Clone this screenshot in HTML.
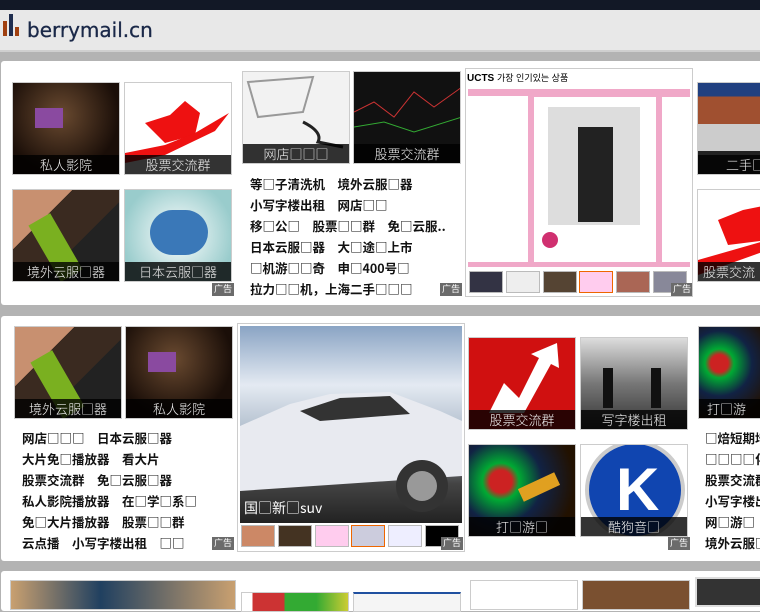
<!DOCTYPE html>
<html><head><meta charset="utf-8"><style>
*{margin:0;padding:0;box-sizing:border-box}
body{width:760px;height:600px;overflow:hidden;background:#b3b3b3;position:relative;font-family:"Liberation Sans","Noto Sans CJK SC",sans-serif}
.a{position:absolute}
.top{left:0;top:0;width:760px;height:10px;background:#121826}
.hd{left:0;top:10px;width:760px;height:42px;background:#e8e8e8;border-bottom:2px solid #cfcfcf}
.pn{background:#fff;border-radius:3px}
.t{position:absolute;overflow:hidden;border:1px solid #ccc}
.cap{position:absolute;left:0;bottom:0;width:100%;height:19px;background:rgba(0,0,0,.8);color:#eee;font-size:13px;text-align:center;line-height:19px;font-family:"Noto Sans CJK SC",sans-serif;font-weight:300}
.ad{position:absolute;width:22px;height:13px;background:#6b6b6b;color:#fff;font-size:9px;line-height:13px;text-align:center}
.tx{position:absolute;font-size:12.5px;font-weight:bold;color:#111;line-height:21px;white-space:nowrap;font-family:"Noto Sans CJK SC",sans-serif}
.th{position:absolute;width:34px;height:22px;border:1px solid #bbb}
</style></head><body>
<div class="a top"></div>
<div class="a hd">
 <div class="a" style="left:3px;top:11px;width:4px;height:15px;background:#a04010"></div>
 <div class="a" style="left:9px;top:4px;width:4px;height:22px;background:#1f2d4f"></div>
 <div class="a" style="left:15px;top:17px;width:4px;height:9px;background:#a04010"></div>
 <div class="a" style="left:27px;top:8px;font-size:20px;color:#1a2848;font-family:'DejaVu Sans',sans-serif;-webkit-text-stroke:0.3px #1a2848">berrymail.cn</div>
</div>

<!-- panel 1 -->
<div class="a pn" style="left:1px;top:61px;width:770px;height:244px"></div>
<div class="t" style="left:12px;top:82px;width:108px;height:93px;background:radial-gradient(circle at 45% 35%,#6a4a30,#1a0e08 70%)"><div class="a" style="left:22px;top:25px;width:28px;height:20px;background:#8a4aa0"></div><div class="cap">私人影院</div></div>
<div class="t" style="left:124px;top:82px;width:108px;height:93px;background:#fff"><svg class="a" width="108" height="93"><path d="M20 40 L45 32 L60 18 L75 30 L70 52 L40 60Z" fill="#e11"/><path d="M0 70 L40 62 L70 50 L104 30 L90 48 L40 72 L0 80Z" fill="#e11"/></svg><div class="cap">股票交流群</div></div>
<div class="t" style="left:12px;top:189px;width:108px;height:93px;background:linear-gradient(135deg,#c89070 0 30%,#3a2a20 30% 60%,#222 60%)"><div class="a" style="left:30px;top:25px;width:25px;height:65px;background:#7ab020;transform:rotate(-30deg)"></div><div class="cap">境外云服□器</div></div>
<div class="t" style="left:124px;top:189px;width:108px;height:93px;background:radial-gradient(circle,#fff,#9cc 80%)"><div class="a" style="left:25px;top:20px;width:58px;height:45px;background:#3a78b8;border-radius:25px"></div><div class="cap">日本云服□器</div></div>
<div class="ad" style="left:212px;top:283px">广告</div>

<div class="t" style="left:242px;top:71px;width:108px;height:93px;background:#f2f2f2"><svg class="a" width="108" height="93"><path d="M5 10 L70 5 L60 40 L15 45Z" fill="none" stroke="#999" stroke-width="2"/><path d="M60 50 Q80 60 75 70 L100 75" stroke="#222" stroke-width="3" fill="none"/></svg><div class="cap">网店□□□</div></div>
<div class="t" style="left:353px;top:71px;width:108px;height:93px;background:#111"><svg class="a" width="108" height="93"><path d="M0 40 L20 30 L40 45 L60 20 L80 35 L108 15" stroke="#c33" fill="none"/><path d="M0 55 L30 50 L60 60 L108 45" stroke="#3a3" fill="none"/></svg><div class="cap">股票交流群</div></div>
<div class="tx" style="left:250px;top:173px">等□子清洗机　境外云服□器<br>小写字楼出租　网店□□<br>移□公□　股票□□群　免□云服..<br>日本云服□器　大□途□上市<br>□机游□□奇　申□400号□<br>拉力□□机，上海二手□□□</div>
<div class="ad" style="left:440px;top:283px">广告</div>

<div class="t" style="left:465px;top:68px;width:228px;height:229px;background:#fff">
 <div class="a" style="left:1px;top:2px;font-size:10px;font-weight:bold">UCTS <span style="font-weight:normal;font-size:9px">가장 인기있는 상품</span></div>
 <div class="a" style="left:2px;top:20px;width:222px;height:178px;background:#f0a8c8"></div>
 <div class="a" style="left:2px;top:27px;width:60px;height:166px;background:#fff"></div>
 <div class="a" style="left:68px;top:28px;width:122px;height:165px;background:#fff"><div class="a" style="left:14px;top:10px;width:92px;height:118px;background:#ddd"><div class="a" style="left:30px;top:20px;width:35px;height:95px;background:#222"></div></div><div class="a" style="left:8px;top:135px;width:16px;height:16px;border-radius:50%;background:#d03070"></div></div>
 <div class="a" style="left:196px;top:28px;width:30px;height:165px;background:#fff"></div>
 <div class="th" style="left:3px;top:202px;background:#334"></div><div class="th" style="left:40px;top:202px;background:#eee"></div><div class="th" style="left:77px;top:202px;background:#543"></div><div class="th" style="left:113px;top:202px;background:#fce;border-color:#e60"></div><div class="th" style="left:150px;top:202px;background:#a65"></div><div class="th" style="left:187px;top:202px;background:#889"></div>
 <div class="ad" style="left:205px;top:214px">广告</div>
</div>

<div class="t" style="left:697px;top:82px;width:70px;height:93px;background:linear-gradient(#204080 0 15%,#a05030 15% 45%,#ccc 45% 75%,#222 75%)"><div class="cap" style="text-align:left;padding-left:28px">二手□信</div></div>
<div class="t" style="left:697px;top:189px;width:70px;height:93px;background:#fff"><svg class="a" width="70" height="93"><path d="M20 30 L45 20 L70 15 L70 50 L30 55Z" fill="#e11"/><path d="M0 70 L70 50 L70 60 L0 85Z" fill="#e11"/></svg><div class="cap" style="text-align:left;padding-left:5px">股票交流</div></div>

<!-- panel 2 -->
<div class="a pn" style="left:1px;top:316px;width:770px;height:245px"></div>
<div class="t" style="left:14px;top:326px;width:108px;height:93px;background:linear-gradient(135deg,#c89070 0 30%,#3a2a20 30% 60%,#222 60%)"><div class="a" style="left:30px;top:25px;width:25px;height:65px;background:#7ab020;transform:rotate(-30deg)"></div><div class="cap">境外云服□器</div></div>
<div class="t" style="left:125px;top:326px;width:108px;height:93px;background:radial-gradient(circle at 45% 35%,#6a4a30,#1a0e08 70%)"><div class="a" style="left:22px;top:25px;width:28px;height:20px;background:#8a4aa0"></div><div class="cap">私人影院</div></div>
<div class="tx" style="left:22px;top:427px">网店□□□　日本云服□器<br>大片免□播放器　看大片<br>股票交流群　免□云服□器<br>私人影院播放器　在□学□系□<br>免□大片播放器　股票□□群<br>云点播　小写字楼出租　□□</div>
<div class="ad" style="left:212px;top:537px">广告</div>

<div class="t" style="left:237px;top:323px;width:228px;height:229px;background:#fff">
 <div class="a" style="left:2px;top:2px;width:222px;height:197px;background:linear-gradient(#8aa4c4,#e4eaf2 30%,#b8c4d2 50%,#444 80%,#222)"><svg class="a" width="222" height="197"><path d="M0 100 L50 78 L90 68 L150 66 L200 85 L222 95 L222 150 L0 165Z" fill="#e8eaf0"/><path d="M60 85 L100 72 L150 70 L170 88 L80 95Z" fill="#333"/><circle cx="182" cy="160" r="26" fill="#333"/><circle cx="182" cy="160" r="15" fill="#999"/></svg><div class="a" style="left:4px;top:172px;color:#fff;font-size:14px;font-family:'Noto Sans CJK SC',sans-serif">国□新□suv</div></div>
 <div class="th" style="left:3px;top:201px;background:#c86"></div><div class="th" style="left:40px;top:201px;background:#432"></div><div class="th" style="left:77px;top:201px;background:#fce"></div><div class="th" style="left:113px;top:201px;background:#ccd;border-color:#e60"></div><div class="th" style="left:150px;top:201px;background:#eef"></div><div class="th" style="left:187px;top:201px;background:#000"></div>
 <div class="ad" style="left:203px;top:213px">广告</div>
</div>

<div class="t" style="left:468px;top:337px;width:108px;height:93px;background:#d01010"><svg class="a" width="108" height="93"><path d="M20 75 L35 45 L50 60 L70 20 L62 16 L88 5 L90 30 L82 26 L55 75Z" fill="#fff"/></svg><div class="cap">股票交流群</div></div>
<div class="t" style="left:580px;top:337px;width:108px;height:93px;background:linear-gradient(#ddd,#777 50%,#333)"><div class="a" style="left:22px;top:30px;width:10px;height:40px;background:#111"></div><div class="a" style="left:70px;top:30px;width:10px;height:40px;background:#111"></div><div class="cap">写字楼出租</div></div>
<div class="t" style="left:468px;top:444px;width:108px;height:93px;background:radial-gradient(circle at 30% 40%,#c22 0 12%,#0a3 20%,#124 45%,#210 80%)"><div class="a" style="left:50px;top:35px;width:40px;height:14px;background:#e0a020;transform:rotate(-25deg)"></div><div class="cap">打□游□</div></div>
<div class="t" style="left:580px;top:444px;width:108px;height:93px;background:#fff"><div class="a" style="left:4px;top:-5px;width:100px;height:100px;border-radius:50%;background:#1045b0;border:4px solid #ccc"></div><div class="a" style="left:35px;top:10px;color:#fff;font-size:60px;font-weight:bold;line-height:70px">K</div><div class="cap">酷狗音□</div></div>
<div class="ad" style="left:668px;top:537px">广告</div>

<div class="t" style="left:698px;top:326px;width:70px;height:93px;background:radial-gradient(circle at 30% 40%,#c22 0 12%,#0a3 20%,#124 45%,#210 80%)"><div class="cap" style="text-align:left;padding-left:8px">打□游</div></div>
<div class="tx" style="left:705px;top:427px">□焙短期培<br>□□□□化<br>股票交流群<br>小写字楼出<br>网□游□　游<br>境外云服□</div>

<!-- panel 3 -->
<div class="a pn" style="left:1px;top:571px;width:770px;height:40px"></div>
<div class="t" style="left:10px;top:580px;width:226px;height:30px;background:linear-gradient(90deg,#c9a070,#204060 40%,#c9a070)"></div>
<div class="t" style="left:241px;top:592px;width:108px;height:20px;background:linear-gradient(90deg,#fff 10%,#c33 10% 40%,#3a3 40% 70%,#cc3)"></div>
<div class="t" style="left:353px;top:592px;width:108px;height:20px;background:#f5f5f5;border-top:2px solid #2050a0"></div>
<div class="t" style="left:470px;top:580px;width:108px;height:30px;background:#fff"></div>
<div class="t" style="left:582px;top:580px;width:108px;height:30px;background:#7a5030"></div>
<div class="t" style="left:695px;top:577px;width:70px;height:30px;background:#333;border:2px solid #ddd"></div>
</body></html>
